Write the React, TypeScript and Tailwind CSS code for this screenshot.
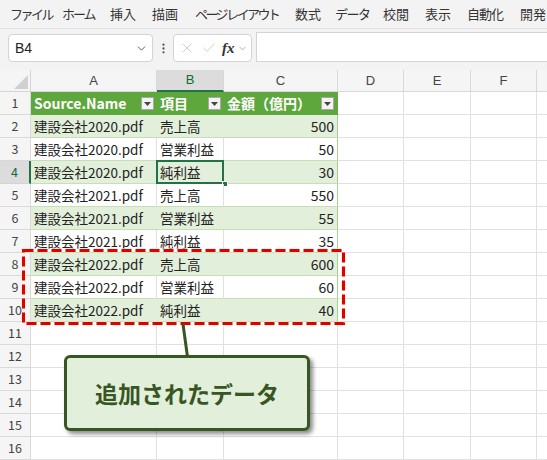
import { ChevronDown, X, Check, EllipsisVertical } from "lucide-react";

const jp = "font-['Noto_Sans_CJK_JP',sans-serif]";

const menu = [
  { label: "ファイル", w: "w-[52px]", t: "tracking-[-2.5px]" },
  { label: "ホーム", w: "w-[48px]", t: "tracking-[-2px]" },
  { label: "挿入", w: "w-[42px]", t: "" },
  { label: "描画", w: "w-[43px]", t: "" },
  { label: "ページ レイアウト", w: "w-[100px]", t: "tracking-[-2.6px]" },
  { label: "数式", w: "w-[40px]", t: "" },
  { label: "データ", w: "w-[48px]", t: "tracking-[-1.5px]" },
  { label: "校閲", w: "w-[42px]", t: "" },
  { label: "表示", w: "w-[42px]", t: "" },
  { label: "自動化", w: "w-[53px]", t: "tracking-[-1px]" },
  { label: "開発", w: "w-[40px]", t: "" },
];

const rows: [string, string, number][] = [
  ["建設会社2020.pdf", "売上高", 500],
  ["建設会社2020.pdf", "営業利益", 50],
  ["建設会社2020.pdf", "純利益", 30],
  ["建設会社2021.pdf", "売上高", 550],
  ["建設会社2021.pdf", "営業利益", 55],
  ["建設会社2021.pdf", "純利益", 35],
  ["建設会社2022.pdf", "売上高", 600],
  ["建設会社2022.pdf", "営業利益", 60],
  ["建設会社2022.pdf", "純利益", 40],
];

const FilterBtn = () => (
  <span className="ml-auto mr-[3px] flex h-[13px] w-[13px] items-center justify-center border border-[#a8a8a8] bg-[#f3f3f3]">
    <svg width="7" height="4" viewBox="0 0 7 4">
      <path d="M0 0h7L3.5 4z" fill="#444" />
    </svg>
  </span>
);

const RowHead = ({ n, active }: { n: number; active?: boolean }) => (
  <div
    className={
      active
        ? "flex w-[31px] shrink-0 items-center justify-center border-b border-r-2 border-b-[#d4d4d4] border-r-[#217346] bg-[#dcdcdc] text-[12.5px] text-[#0e6b36]"
        : "flex w-[31px] shrink-0 items-center justify-center border-b border-r border-[#d9d9d9] bg-[#f5f5f5] text-[12.5px] text-[#444]"
    }
  >
    {n}
  </div>
);

const EmptyCells = () => (
  <>
    <div className="w-[66px] shrink-0 border-b border-r border-[#e1e1e1]" />
    <div className="w-[67px] shrink-0 border-b border-r border-[#e1e1e1]" />
    <div className="w-[66px] shrink-0 border-b border-r border-[#e1e1e1]" />
    <div className="w-[60px] shrink-0 border-b border-[#e1e1e1]" />
  </>
);

export default function App() {
  return (
    <div className={`relative h-[460px] w-[547px] overflow-hidden bg-white ${jp}`}>
      {/* menu */}
      <div className="flex h-[29px] items-center bg-[#f3f3f3] pl-[10px] text-[13px] text-[#333] whitespace-nowrap border-b border-[#e2e2e2]">
        {menu.map((m) => (
          <span key={m.label} className={`${m.w} ${m.t} shrink-0`}>
            {m.label}
          </span>
        ))}
      </div>

      {/* formula bar */}
      <div className="flex h-[41px] items-start bg-[#f3f3f3] pt-[5px]">
        <div className="ml-[8px] flex h-[28px] w-[145px] items-center rounded-[4px] border border-[#d4d4d4] bg-white pl-[6px] pr-[4px] text-[14px] text-[#222]">
          <span className="font-['Liberation_Sans',sans-serif]">B4</span>
          <ChevronDown size={13} strokeWidth={1.6} className="ml-auto text-[#444]" />
        </div>
        <div className="flex h-[28px] w-[20px] items-center justify-center text-[#555]">
          <EllipsisVertical size={13} strokeWidth={2.2} />
        </div>
        <div className="flex h-[28px] w-[79px] items-center rounded-[4px] border border-[#d4d4d4] bg-white pl-[5px]">
          <X size={16} strokeWidth={1.1} className="text-[#bdbdbd]" />
          <Check size={16} strokeWidth={1.1} className="ml-[6px] text-[#bdbdbd]" />
          <span className="ml-[5px] font-['Liberation_Serif',serif] text-[15px] font-bold italic text-[#333]">fx</span>
          <ChevronDown size={11} strokeWidth={1.4} className="ml-[2px] text-[#888]" />
        </div>
        <div className="-mt-[2px] ml-[4px] h-[30px] flex-1 border-y border-l border-[#d4d4d4] bg-white" />
      </div>

      {/* sheet */}
      <div className="flex flex-col">
        <div className="flex h-[22px] bg-[#f5f5f5] text-[13px] text-[#444] font-['Liberation_Sans',sans-serif]">
          <div className="relative w-[31px] shrink-0 border-b border-r border-[#d4d4d4]">
            <svg className="absolute bottom-[2px] right-[2px]" width="14" height="14" viewBox="0 0 14 14">
              <path d="M14 0V14H0z" fill="#d0d0d0" />
            </svg>
          </div>
          <div className="flex w-[126px] shrink-0 items-center justify-center border-b border-r border-[#d9d9d9]">A</div>
          <div className="flex w-[67px] shrink-0 items-center justify-center border-b-2 border-r border-b-[#217346] border-r-[#d9d9d9] bg-[#dcdcdc] text-[#0e6b36]">B</div>
          <div className="flex w-[114px] shrink-0 items-center justify-center border-b border-r border-[#d9d9d9]">C</div>
          <div className="flex w-[66px] shrink-0 items-center justify-center border-b border-r border-[#d9d9d9]">D</div>
          <div className="flex w-[67px] shrink-0 items-center justify-center border-b border-r border-[#d9d9d9]">E</div>
          <div className="flex w-[66px] shrink-0 items-center justify-center border-b border-r border-[#d9d9d9]">F</div>
          <div className="flex w-[60px] shrink-0 items-center justify-center border-b border-[#d9d9d9]" />
        </div>

        {/* row 1: table header */}
        <div className="flex h-[23px]">
          <RowHead n={1} />
          <div className="flex w-[126px] shrink-0 items-center bg-[#5ea73c] pl-[3px] text-[14px] font-bold text-white">
            Source.Name
            <FilterBtn />
          </div>
          <div className="flex w-[67px] shrink-0 items-center bg-[#5ea73c] pl-[3px] text-[14px] font-bold text-white">
            項目
            <FilterBtn />
          </div>
          <div className="flex w-[114px] shrink-0 items-center border-r border-[#5ea73c] bg-[#5ea73c] pl-[3px] text-[14px] font-bold text-white">
            金額（億円）
            <FilterBtn />
          </div>
          <EmptyCells />
        </div>

        {rows.map(([file, item, amount], i) => {
          const green = i % 2 === 0;
          return (
            <div key={i} className="flex h-[23px] text-[13.5px] text-[#222]">
              <RowHead n={i + 2} active={i === 2} />
              <div
                className={
                  green
                    ? "flex w-[126px] shrink-0 items-center border-b border-[#c6e0b4] bg-[#e2efda] pl-[3px]"
                    : "flex w-[126px] shrink-0 items-center border-b border-r border-b-[#c6e0b4] border-r-[#e1e1e1] bg-white pl-[3px]"
                }
              >
                {file}
              </div>
              <div
                className={
                  green
                    ? "relative flex w-[67px] shrink-0 items-center border-b border-[#c6e0b4] bg-[#e2efda] pl-[3px]"
                    : "relative flex w-[67px] shrink-0 items-center border-b border-r border-b-[#c6e0b4] border-r-[#e1e1e1] bg-white pl-[3px]"
                }
              >
                {item}
                {i === 2 && (
                  <>
                    <span className="absolute -left-px -top-px h-[24px] w-[68px] border-2 border-[#217346]" />
                    <span className="absolute -bottom-[4px] -right-[4px] h-[6px] w-[6px] border border-white bg-[#217346]" />
                  </>
                )}
              </div>
              <div
                className={
                  green
                    ? "flex w-[114px] shrink-0 items-center justify-end border-b border-r border-b-[#c6e0b4] border-r-[#a9d08e] bg-[#e2efda] pr-[3px] text-[14px]"
                    : "flex w-[114px] shrink-0 items-center justify-end border-b border-r border-b-[#c6e0b4] border-r-[#a9d08e] bg-white pr-[3px] text-[14px]"
                }
              >
                {amount}
              </div>
              <EmptyCells />
            </div>
          );
        })}

        {[11, 12, 13, 14, 15, 16].map((n) => (
          <div key={n} className="flex h-[23px]">
            <RowHead n={n} />
            <div className="w-[126px] shrink-0 border-b border-r border-[#e1e1e1]" />
            <div className="w-[67px] shrink-0 border-b border-r border-[#e1e1e1]" />
            <div className="w-[114px] shrink-0 border-b border-r border-[#e1e1e1]" />
            <EmptyCells />
          </div>
        ))}
      </div>

      {/* annotation */}
      <svg className="absolute left-0 top-0" width="547" height="460">
        <rect x="23.5" y="250.5" width="320" height="73" fill="none" stroke="#f3e9c8" strokeWidth="5" strokeDasharray="10 4" opacity="0.6" />
        <rect x="23.5" y="250.5" width="320" height="73" fill="none" stroke="#e00000" strokeWidth="3" strokeDasharray="10 4" />
        <line x1="183" y1="324" x2="187.5" y2="357" stroke="#375623" strokeWidth="3" />
      </svg>
      <div className="absolute left-[64px] top-[355px] flex h-[76px] w-[246px] items-center justify-center rounded-[6px] border-[3px] border-[#375623] bg-[#e2efda] shadow-[3px_3px_4px_rgba(0,0,0,0.45)]">
        <span className="text-[23px] font-bold text-[#375623]">追加されたデータ</span>
      </div>
    </div>
  );
}
